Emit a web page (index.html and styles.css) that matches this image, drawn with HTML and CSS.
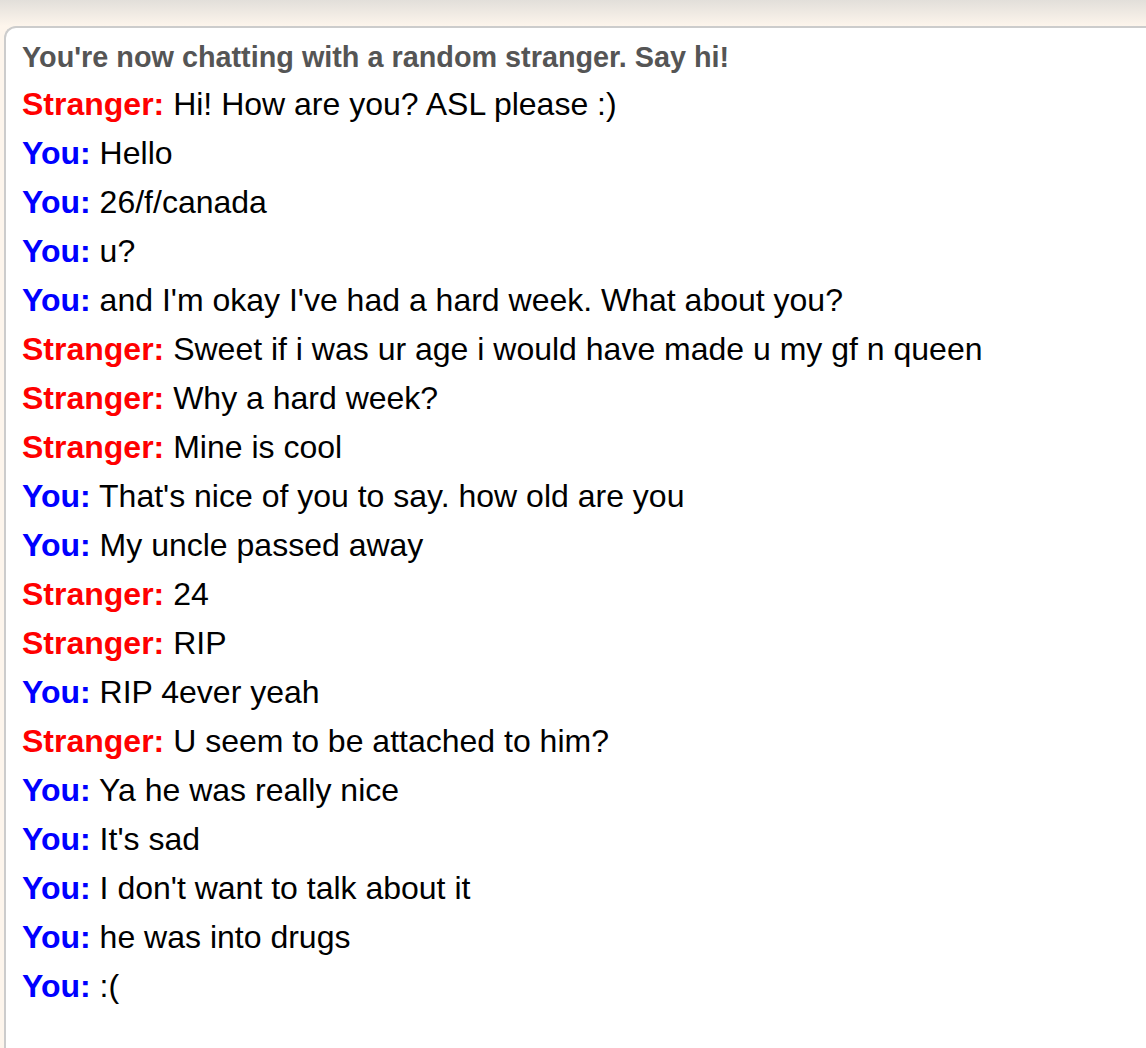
FILE: index.html
```html
<!DOCTYPE html>
<html lang="en">
<head>
<meta charset="utf-8">
<title>Chat</title>
<link rel="stylesheet" href="styles.css">
</head>
<body>
<div class="topbar"></div>
<div class="logbox">
  <div class="statuslog">You're now chatting with a random stranger. Say hi!</div>
  <div class="logitem"><strong class="stranger">Stranger:</strong> <span>Hi! How are you? ASL please :)</span></div>
  <div class="logitem"><strong class="you">You:</strong> <span>Hello</span></div>
  <div class="logitem"><strong class="you">You:</strong> <span>26/f/canada</span></div>
  <div class="logitem"><strong class="you">You:</strong> <span>u?</span></div>
  <div class="logitem"><strong class="you">You:</strong> <span>and I'm okay I've had a hard week. What about you?</span></div>
  <div class="logitem"><strong class="stranger">Stranger:</strong> <span>Sweet if i was ur age i would have made u my gf n queen</span></div>
  <div class="logitem"><strong class="stranger">Stranger:</strong> <span>Why a hard week?</span></div>
  <div class="logitem"><strong class="stranger">Stranger:</strong> <span>Mine is cool</span></div>
  <div class="logitem"><strong class="you">You:</strong> <span>That's nice of you to say. how old are you</span></div>
  <div class="logitem"><strong class="you">You:</strong> <span>My uncle passed away</span></div>
  <div class="logitem"><strong class="stranger">Stranger:</strong> <span>24</span></div>
  <div class="logitem"><strong class="stranger">Stranger:</strong> <span>RIP</span></div>
  <div class="logitem"><strong class="you">You:</strong> <span>RIP 4ever yeah</span></div>
  <div class="logitem"><strong class="stranger">Stranger:</strong> <span>U seem to be attached to him?</span></div>
  <div class="logitem"><strong class="you">You:</strong> <span>Ya he was really nice</span></div>
  <div class="logitem"><strong class="you">You:</strong> <span>It's sad</span></div>
  <div class="logitem"><strong class="you">You:</strong> <span>I don't want to talk about it</span></div>
  <div class="logitem"><strong class="you">You:</strong> <span>he was into drugs</span></div>
  <div class="logitem"><strong class="you">You:</strong> <span>:(</span></div>
</div>
</body>
</html>
```
FILE: styles.css
```css
html, body {
  margin: 0;
  padding: 0;
  overflow: hidden;
}
body {
  background: #fdf5ec;
  font-family: "Liberation Sans", Arial, Helvetica, sans-serif;
  width: 1146px;
  height: 1048px;
}
.topbar {
  height: 26px;
  background: linear-gradient(to bottom, #e2dfda 0%, #fdf5ec 100%);
}
.logbox {
  margin-left: 4px;
  width: 1142px;
  height: 1022px;
  background: #ffffff;
  border-top: 2px solid #cccccc;
  border-left: 2px solid #cccccc;
  border-top-left-radius: 12px;
  padding: 8px 0 0 16px;
  box-sizing: border-box;
  font-size: 32px;
  color: #000000;
  overflow: hidden;
}
.statuslog {
  color: #555555;
  font-weight: bold;
  font-size: 28.8px;
  line-height: 42px;
  margin-bottom: 2px;
  white-space: nowrap;
}
.logitem {
  line-height: 49px;
  white-space: nowrap;
}
.stranger {
  color: #ff0000;
  font-weight: bold;
}
.you {
  color: #0000ff;
  font-weight: bold;
}
```
